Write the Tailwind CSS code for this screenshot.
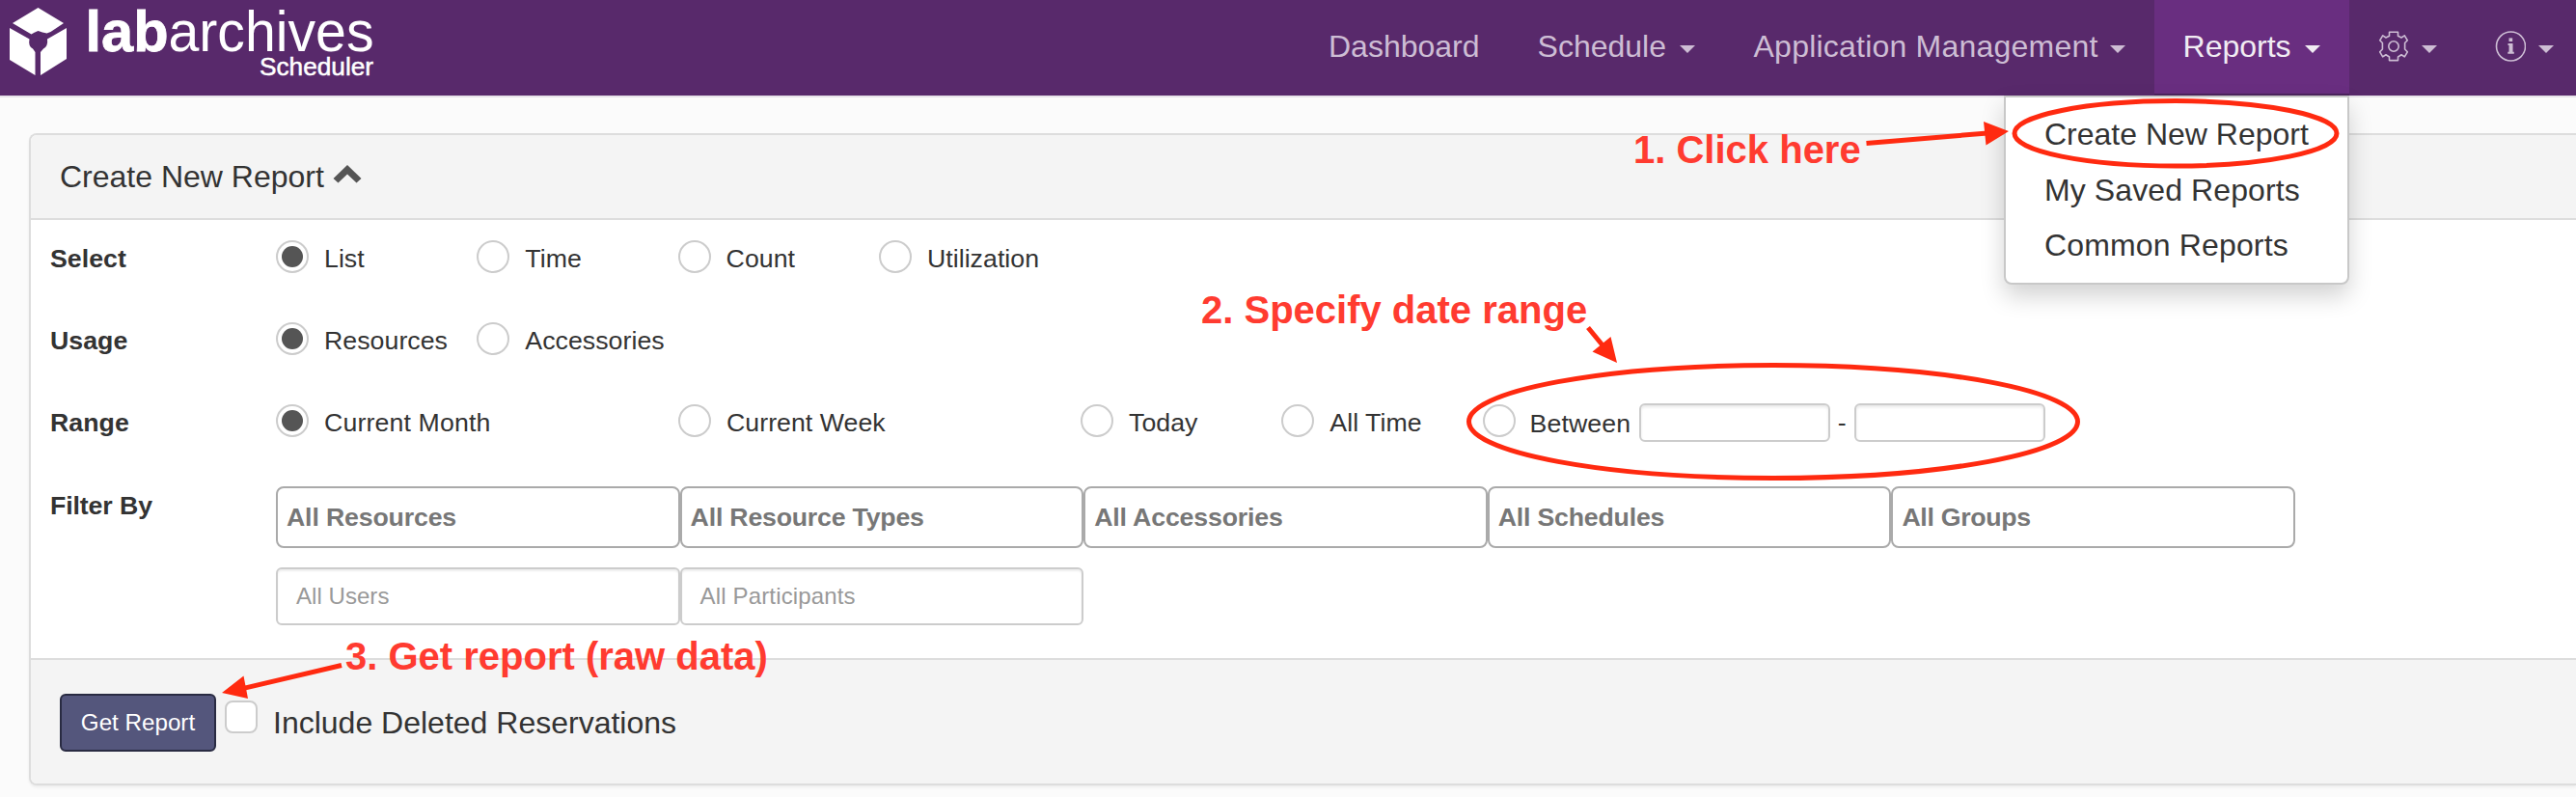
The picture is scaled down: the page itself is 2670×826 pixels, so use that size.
<!DOCTYPE html>
<html lang="en">
<head>
<meta charset="utf-8">
<title>LabArchives Scheduler - Create New Report</title>
<script src="https://cdn.jsdelivr.net/npm/@tailwindcss/browser@4"></script>
</head>
<body class="relative h-[826px] w-[2670px] overflow-hidden bg-[#fbfbfb] text-[#333]" style="font-family:'Liberation Sans',Arial,sans-serif">

<header class="flex h-[101px] border-b-2 border-[#e7e3ea] bg-[#58296b]">
  <svg class="h-[99px] w-[400px] shrink-0" viewBox="0 0 400 99" fill="#fff">
    <path d="M39.500 8 66 24 52.500 33 48.500 34.500 Q44 33.500 39.500 32 Q35 33.500 32.500 35.500L13 24Z"/>
    <path d="M10 29 30.500 40.500 Q29 48 34 50.500L36.500 54V78L10 62Z"/>
    <path d="M69 29 49 40.500 Q50 48 45 50.500L42 54V78L69 61Z"/>
    <text x="88.500" y="53" font-size="60" font-weight="700" textLength="86" lengthAdjust="spacingAndGlyphs" stroke="#fff" stroke-width=".8">lab</text>
    <text x="174.500" y="53" font-size="60" textLength="213" lengthAdjust="spacingAndGlyphs">archives</text>
    <text x="269" y="77.500" font-size="26" textLength="118" lengthAdjust="spacingAndGlyphs" stroke="#fff" stroke-width=".5">Scheduler</text>
  </svg>
  <nav class="ml-[947px] flex shrink-0 text-[32px] leading-[96px] text-[#cdbdd4]">
    <a class="px-[30px]">Dashboard</a>
    <a class="flex w-[224px] shrink-0 justify-between pr-[31px] pl-[30px]">Schedule<svg class="mt-[47px] h-2 w-4" viewBox="0 0 16 8" fill="currentColor"><path d="M0 0H16L8 8Z"/></svg></a>
    <a class="flex w-[445px] shrink-0 justify-between px-[30px] tracking-[0.22px] whitespace-nowrap">Application Management<svg class="mt-[47px] h-2 w-4" viewBox="0 0 16 8" fill="currentColor"><path d="M0 0H16L8 8Z"/></svg></a>
    <a class="flex w-[202px] shrink-0 justify-between border-b-2 border-[#4c235d] bg-[#692e80] px-[30px] text-[#f1ecf3]">Reports<svg class="mt-[47px] h-2 w-4" viewBox="0 0 16 8" fill="currentColor"><path d="M0 0H16L8 8Z"/></svg></a>
    <a class="flex w-[121px] shrink-0 justify-between px-[30px]">
      <svg class="mt-8 h-8 w-8" viewBox="0 0 32 32" fill="none" stroke="currentColor" stroke-width="1.600" stroke-linejoin="round"><path d="M11.500 1.300H20.500V5.200L24 7 27.300 4.800 30.300 9.800 27.600 12.500V19L30.300 21.800 27.300 26.800 24 24.800 20.500 27V30.600H11.500V27L8 24.800 4.700 26.800 1.700 21.800 4.400 19V12.500L1.700 9.800 4.700 4.800 8 7 11.500 5.200Z"/><circle cx="16" cy="16" r="5.200"/></svg>
      <svg class="mt-[47px] h-2 w-4" viewBox="0 0 16 8" fill="currentColor"><path d="M0 0H16L8 8Z"/></svg></a>
    <a class="flex w-[121px] shrink-0 justify-between px-[30px]">
      <svg class="mt-8 h-8 w-8" viewBox="0 0 32 32" fill="none" stroke="currentColor" stroke-width="1.600"><circle cx="16.500" cy="16" r="15"/><path d="M13.500 14H17.500V22.800M13.300 22.800H19.800" stroke-width="2"/><path d="M16.300 13.500V22.500" stroke-width="3.500"/><path d="M14.500 9.200H18.200" stroke-width="3.600"/></svg>
      <svg class="mt-[47px] h-2 w-4" viewBox="0 0 16 8" fill="currentColor"><path d="M0 0H16L8 8Z"/></svg></a>
  </nav>
</header>

<main class="mt-[37px] ml-[30px] h-[676px] overflow-hidden rounded-l-lg border-2 border-r-0 border-[#ddd] bg-white shadow-[0_2px_3px_rgba(0,0,0,0.06)]">
  <div class="flex h-[88px] border-b-2 border-[#ddd] bg-[#f4f4f4] pl-[30px] text-[32px] leading-[86px]">
    Create New Report
    <svg class="mt-[30px] ml-[9px] h-5 w-[30px]" viewBox="0 0 30 20" fill="#555"><path d="M15 1 29.500 15 24.500 19.500 15 10.500 5.500 19.500 .5 15Z"/></svg>
  </div>

  <form class="h-[454px] pl-5 text-[26.700px] leading-[34px] tracking-[0.05px]">
    <div class="flex h-[85px] pt-[21px]">
      <span class="w-[234px] pt-[2px] font-bold">Select</span>
      <label class="flex w-[208.300px] gap-4"><span class="flex size-[34px] items-center justify-center rounded-full border-2 border-[#ccc]"><span class="size-[22px] rounded-full bg-[#555]"></span></span><span class="pt-[2px]">List</span></label>
      <label class="flex w-[208.300px] gap-4"><span class="size-[34px] rounded-full border-2 border-[#ccc]"></span><span class="pt-[2px]">Time</span></label>
      <label class="flex w-[208.300px] gap-4"><span class="size-[34px] rounded-full border-2 border-[#ccc]"></span><span class="pt-[2px]">Count</span></label>
      <label class="flex w-[208.300px] gap-4"><span class="size-[34px] rounded-full border-2 border-[#ccc]"></span><span class="pt-[2px]">Utilization</span></label>
    </div>
    <div class="flex h-[85px] pt-[21px]">
      <span class="w-[234px] pt-[2px] font-bold">Usage</span>
      <label class="flex w-[208.300px] gap-4"><span class="flex size-[34px] items-center justify-center rounded-full border-2 border-[#ccc]"><span class="size-[22px] rounded-full bg-[#555]"></span></span><span class="pt-[2px]">Resources</span></label>
      <label class="flex w-[208.300px] gap-4"><span class="size-[34px] rounded-full border-2 border-[#ccc]"></span><span class="pt-[2px]">Accessories</span></label>
    </div>
    <div class="flex h-[85px] pt-[21px]">
      <span class="w-[234px] pt-[2px] font-bold">Range</span>
      <label class="flex w-[417px] gap-4"><span class="flex size-[34px] items-center justify-center rounded-full border-2 border-[#ccc]"><span class="size-[22px] rounded-full bg-[#555]"></span></span><span class="pt-[2px] tracking-[0.15px]">Current Month</span></label>
      <label class="flex w-[417px] gap-4"><span class="size-[34px] rounded-full border-2 border-[#ccc]"></span><span class="pt-[2px]">Current Week</span></label>
      <label class="flex w-[208.300px] gap-4"><span class="size-[34px] rounded-full border-2 border-[#ccc]"></span><span class="pt-[2px]">Today</span></label>
      <label class="flex w-[208.300px] gap-4"><span class="size-[34px] rounded-full border-2 border-[#ccc]"></span><span class="pt-[2px]">All Time</span></label>
      <label class="flex w-[162px] gap-[15px]"><span class="size-[34px] shrink-0 rounded-full border-2 border-[#ccc]"></span><span class="pt-[3px] tracking-[0.1px]">Between</span></label>
      <span class="-mt-px h-10 w-[198px] rounded-md border-2 border-[#ccc] shadow-[inset_0_2px_3px_rgba(0,0,0,0.09)]"></span>
      <span class="w-[25px] pt-[2px] text-center">-</span>
      <span class="-mt-px h-10 w-[198px] rounded-md border-2 border-[#ccc] shadow-[inset_0_2px_3px_rgba(0,0,0,0.09)]"></span>
    </div>
    <div class="flex pt-[21px]">
      <span class="w-[234px] pt-[3px] font-bold tracking-[-0.1px]">Filter By</span>
      <div class="grid grid-cols-[repeat(5,418.600px)] gap-y-5">
        <span class="h-16 rounded-lg border-2 border-[#aaa] pl-[9px] font-bold leading-[60px] tracking-[-0.15px] text-[#777]">All Resources</span>
        <span class="h-16 rounded-lg border-2 border-[#aaa] pl-[9px] font-bold leading-[60px] tracking-[-0.2px] text-[#777]">All Resource Types</span>
        <span class="h-16 rounded-lg border-2 border-[#aaa] pl-[9px] font-bold leading-[60px] tracking-[-0.15px] text-[#777]">All Accessories</span>
        <span class="h-16 rounded-lg border-2 border-[#aaa] pl-[9px] font-bold leading-[60px] tracking-[-0.2px] text-[#777]">All Schedules</span>
        <span class="h-16 rounded-lg border-2 border-[#aaa] pl-[9px] font-bold leading-[60px] tracking-[-0.3px] text-[#777]">All Groups</span>
        <span class="h-[60px] rounded-md border-2 border-[#ccc] pl-[19px] text-[24px] leading-[56px] text-[#999] shadow-[inset_0_2px_2px_rgba(0,0,0,0.07)]">All Users</span>
        <span class="h-[60px] rounded-md border-2 border-[#ccc] pl-[19px] text-[24px] leading-[56px] tracking-[0.15px] text-[#999] shadow-[inset_0_2px_2px_rgba(0,0,0,0.07)]">All Participants</span>
      </div>
    </div>
  </form>

  <div class="flex h-[130px] border-t-2 border-[#ddd] bg-[#f4f4f4] pl-[30px]">
    <button class="mt-[35px] h-[60px] w-[162px] rounded-md border-2 border-[#292b42] bg-[#54567c] text-[24.200px] leading-[56px] text-white">Get Report</button>
    <span class="mt-[42px] ml-[9px] size-[34px] rounded-lg border-2 border-[#ccc] bg-white"></span>
    <span class="mt-[45px] ml-4 text-[32px] leading-[40px]">Include Deleted Reservations</span>
  </div>
</main>

<!-- Reports menu, opened -->
<div class="absolute top-[99px] left-[2077px] h-[196px] w-[358px] rounded-b-lg border-2 border-[#c8c8c8] bg-white pt-[10px] pl-10 text-[32px] leading-[57.500px] shadow-[0_12px_24px_rgba(0,0,0,0.176)]">
  <div>Create New Report</div>
  <div class="tracking-[0.1px]">My Saved Reports</div>
  <div class="tracking-[0.15px]">Common Reports</div>
</div>

<!-- Walkthrough callouts -->
<svg class="absolute top-0 left-0 h-[826px] w-[2670px]" viewBox="0 0 2670 826" fill="none" stroke="#ff2a10" stroke-width="5">
  <ellipse cx="2255" cy="138.300" rx="167" ry="33.700"/>
  <ellipse cx="1838" cy="437" rx="315.500" ry="58.500"/>
  <path d="M1934.500 148.500 2060 138M1646 339.500 1662 359M354 689.500 252 713.500"/>
  <path d="M2082 136 2056 126 2058.500 150.500ZM1676 376 1669.500 349 1650.500 364.500ZM230 718 252.500 700.500 257 724Z" fill="#ff2a10" stroke="none"/>
</svg>
<div class="absolute top-[135px] left-[1693px] text-[40px] leading-10 font-bold whitespace-nowrap text-[#ff3b30]">1. Click here</div>
<div class="absolute top-[301px] left-[1245px] text-[40px] leading-10 font-bold whitespace-nowrap text-[#ff3b30]">2. Specify date range</div>
<div class="absolute top-[660px] left-[358px] text-[40px] leading-10 font-bold whitespace-nowrap text-[#ff3b30]">3. Get report (raw data)</div>
</body>
</html>
